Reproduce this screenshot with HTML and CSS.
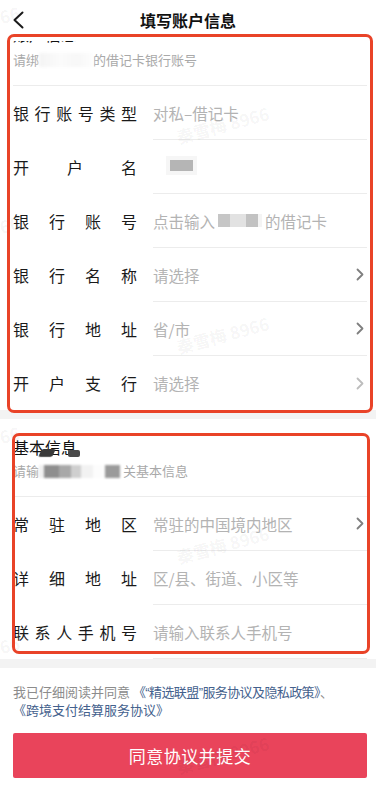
FILE: index.html
```html
<!DOCTYPE html>
<html lang="zh-CN">
<head>
<meta charset="utf-8">
<title>填写账户信息</title>
<link rel="stylesheet" href="styles.css">
</head>
<body>
<div class="page">
  <header class="nav">
    <svg class="back" width="12" height="18" viewBox="0 0 12 18"><path d="M10.5 1.5 L2.5 9 L10.5 16.5" fill="none" stroke="#1a1a1a" stroke-width="2" stroke-linecap="round" stroke-linejoin="round"/></svg>
    <h1 class="nav-title">填写账户信息</h1>
  </header>

  <main class="content">
    <section class="card">
      <div class="card-head">
        <div class="card-title title-first">账户信息</div>
        <div class="card-sub">请绑<span class="blur blur-white"></span>的借记卡银行账号</div>
      </div>
      <div class="row">
        <span class="label">银行账号类型</span>
        <span class="value"><span class="val-text">对私–借记卡</span></span>
      </div>
      <div class="row">
        <span class="label">开户名</span>
        <span class="value"><span class="name-blur"></span></span>
      </div>
      <div class="row">
        <span class="label">银行账号</span>
        <span class="value"><span class="val-text">点击输入<span class="blur blur-grey"></span>的借记卡</span></span>
      </div>
      <div class="row">
        <span class="label">银行名称</span>
        <span class="value"><span class="val-text">请选择</span><svg class="chev" width="8" height="13" viewBox="0 0 8 13"><path d="M1.5 1.5 L6.5 6.5 L1.5 11.5" fill="none" stroke="#7f7f7f" stroke-width="1.8" stroke-linecap="round" stroke-linejoin="round"/></svg></span>
      </div>
      <div class="row">
        <span class="label">银行地址</span>
        <span class="value"><span class="val-text">省/市</span><svg class="chev" width="8" height="13" viewBox="0 0 8 13"><path d="M1.5 1.5 L6.5 6.5 L1.5 11.5" fill="none" stroke="#7f7f7f" stroke-width="1.8" stroke-linecap="round" stroke-linejoin="round"/></svg></span>
      </div>
      <div class="row row-last">
        <span class="label">开户支行</span>
        <span class="value"><span class="val-text">请选择</span><svg class="chev" width="8" height="13" viewBox="0 0 8 13"><path d="M1.5 1.5 L6.5 6.5 L1.5 11.5" fill="none" stroke="#bdbdbd" stroke-width="1.8" stroke-linecap="round" stroke-linejoin="round"/></svg></span>
      </div>
    </section>

    <section class="card">
      <div class="card-head">
        <div class="card-title title-masked">基本信息<span class="smudge smudge-a"></span><span class="smudge smudge-b"></span></div>
        <div class="card-sub">请输<span class="blur blur-mix"></span>关基本信息</div>
      </div>
      <div class="row">
        <span class="label">常驻地区</span>
        <span class="value"><span class="val-text">常驻的中国境内地区</span><svg class="chev" width="8" height="13" viewBox="0 0 8 13"><path d="M1.5 1.5 L6.5 6.5 L1.5 11.5" fill="none" stroke="#7f7f7f" stroke-width="1.8" stroke-linecap="round" stroke-linejoin="round"/></svg></span>
      </div>
      <div class="row">
        <span class="label">详细地址</span>
        <span class="value"><span class="val-text">区/县、街道、小区等</span></span>
      </div>
      <div class="row">
        <span class="label">联系人手机号</span>
        <span class="value"><span class="val-text">请输入联系人手机号</span></span>
      </div>
    </section>

    <footer class="foot">
      <p class="agree">我已仔细阅读并同意 <span class="link link-1">《<span class="q">“</span>精选联盟<span class="q">”</span>服务协议及隐私政策》</span>、</p>
      <p class="agree agree-2"><span class="link">《跨境支付结算服务协议》</span></p>
      <button class="submit">同意协议并提交</button>
    </footer>
  </main>

  <div class="mark mark-1">秦雪梅 8966</div>
  <div class="mark mark-2">秦雪梅 8966</div>
  <div class="mark mark-3">秦雪梅 8966</div>
  <div class="mark mark-4">秦雪梅 8966</div>
  <div class="mark mark-l1">66</div>
  <div class="mark mark-l2">66</div>
  <div class="mark mark-l3">66</div>
  <div class="mark mark-l4">66</div>

  <div class="annot annot-1"></div>
  <div class="annot annot-2"></div>
</div>
</body>
</html>
```

FILE: styles.css
```css
* { box-sizing: border-box; }
html, body { margin: 0; padding: 0; }
body {
  font-family: "Noto Sans CJK SC", "Noto Sans", sans-serif;
  background: #fff;
  color: #1a1a1a;
}
.page {
  position: relative;
  width: 376px;
  height: 786px;
  overflow: hidden;
  background: #f3f3f3;
}
.nav {
  position: relative;
  z-index: 2;
  height: 41px;
  background: #fff;
  display: flex;
  align-items: flex-start;
  justify-content: center;
}
.back {
  position: absolute;
  left: 12px;
  top: 11px;
}
.nav-title {
  margin: 8px 0 0;
  font-size: 16px;
  line-height: 24px;
  font-weight: 700;
  color: #111;
}
.content {
  margin-top: -33px;
  display: flex;
  flex-direction: column;
  gap: 9px;
}
.card {
  background: #fff;
}
.card-head {
  margin: 0 9px 0 13px;
  padding: 17px 0 15px;
  border-bottom: 1px solid #ececec;
}
.card-title {
  position: relative;
  font-size: 16px;
  line-height: 22px;
  color: #111;
}
.title-first {
  top: -2px;
}
.card-sub {
  margin-top: 3px;
  font-size: 13px;
  line-height: 20px;
  color: #a9a9a9;
  display: flex;
  align-items: center;
}
.blur {
  display: inline-block;
  height: 14px;
}
.blur-white {
  width: 54px;
  background: linear-gradient(90deg, #f4f4f4, #fbfbfb 40%, #f7f7f7 70%, #fdfdfd);
  filter: blur(1.5px);
}
.blur-grey {
  width: 44px;
  height: 13px;
  margin: 0 3px;
  vertical-align: -1px;
  background: linear-gradient(90deg, #c6c6c6 0 28%, #e2e2e2 28% 64%, #c2c2c2 64% 90%, #f4f4f4 90%);
}
.blur-mix {
  width: 84px;
  height: 13px;
  background: linear-gradient(90deg, #f0f0f0 0 6%, #8e8e8e 6% 24%, #a8a8a8 24% 38%, #cfcfcf 38% 50%, #f2f2f2 50% 64%, #fcfcfc 64% 78%, #9a9a9a 78% 97%, #fff 97%);
  filter: blur(0.8px);
}
.title-masked { width: max-content; }
.smudge {
  position: absolute;
  background: #3a3a3a;
  filter: blur(0.6px);
  border-radius: 2px;
}
.smudge-a { left: 27px; top: 13px; width: 14px; height: 8px; transform: skewX(-25deg); }
.smudge-b { left: 55px; top: 14px; width: 12px; height: 7px; background: #4a4a4a; }

.row {
  display: flex;
  align-items: center;
  height: 54px;
  padding-left: 13px;
  padding-right: 9px;
}
.label {
  flex: 0 0 124px;
  width: 124px;
  font-size: 16px;
  line-height: 22px;
  color: #1a1a1a;
  text-align: justify;
  text-align-last: justify;
  margin-right: 16px;
}
.value {
  flex: 1;
  height: 54px;
  display: flex;
  align-items: center;
  justify-content: space-between;
  padding-right: 4px;
  border-bottom: 1px solid #ececec;
}
.row-last .value { border-bottom: 0; }
.val-text {
  font-size: 15.5px;
  line-height: 22px;
  color: #b3b3b3;
  display: flex;
  align-items: center;
}
.name-blur {
  display: inline-block;
  width: 23px;
  height: 11px;
  margin-left: 17px;
  margin-top: -2px;
  background: #b5b5b5;
  box-shadow: 0 0 0 4px #f6f6f6;
}
.chev { flex: 0 0 auto; margin-right: -1px; }

.foot {
  background: #fff;
  padding: 16px 9px 20px 13px;
  flex: 1;
  min-height: 130px;
}
.agree {
  margin: 0;
  font-size: 13px;
  line-height: 16px;
  color: #8c8c8c;
  white-space: nowrap;
}
.agree-2 { margin-top: 1px; }
.q { font-family: "Liberation Sans", sans-serif; }
.link { color: #44618d; }
.link-1 { letter-spacing: -0.6px; }
.submit {
  display: block;
  width: 354px;
  height: 45px;
  margin-top: 15px;
  border: 0;
  border-radius: 2px;
  background: #e9445b;
  color: #fff;
  font-family: "Noto Sans CJK SC", "Noto Sans", sans-serif;
  font-size: 17px;
  letter-spacing: 0.5px;
}

.mark {
  position: absolute;
  z-index: 3;
  font-size: 17px;
  font-weight: 700;
  color: rgba(0, 0, 0, 0.05);
  white-space: nowrap;
  transform: rotate(-15deg);
  transform-origin: left bottom;
  pointer-events: none;
}
.mark-1 { left: 180px; top: 124px; }
.mark-2 { left: 180px; top: 334px; }
.mark-3 { left: 180px; top: 544px; }
.mark-4 { left: 180px; top: 754px; }
.mark-l1 { left: 3px; top: 4px; }
.mark-l2 { left: 3px; top: 214px; }
.mark-l3 { left: 3px; top: 424px; }
.mark-l4 { left: 3px; top: 634px; }

.annot {
  position: absolute;
  z-index: 4;
  border: 3px solid #e94328;
  border-radius: 7px;
  pointer-events: none;
}
.annot-1 { left: 7px; top: 34px; width: 366px; height: 379px; }
.annot-2 { left: 12px; top: 433px; width: 358px; height: 221px; }
```
